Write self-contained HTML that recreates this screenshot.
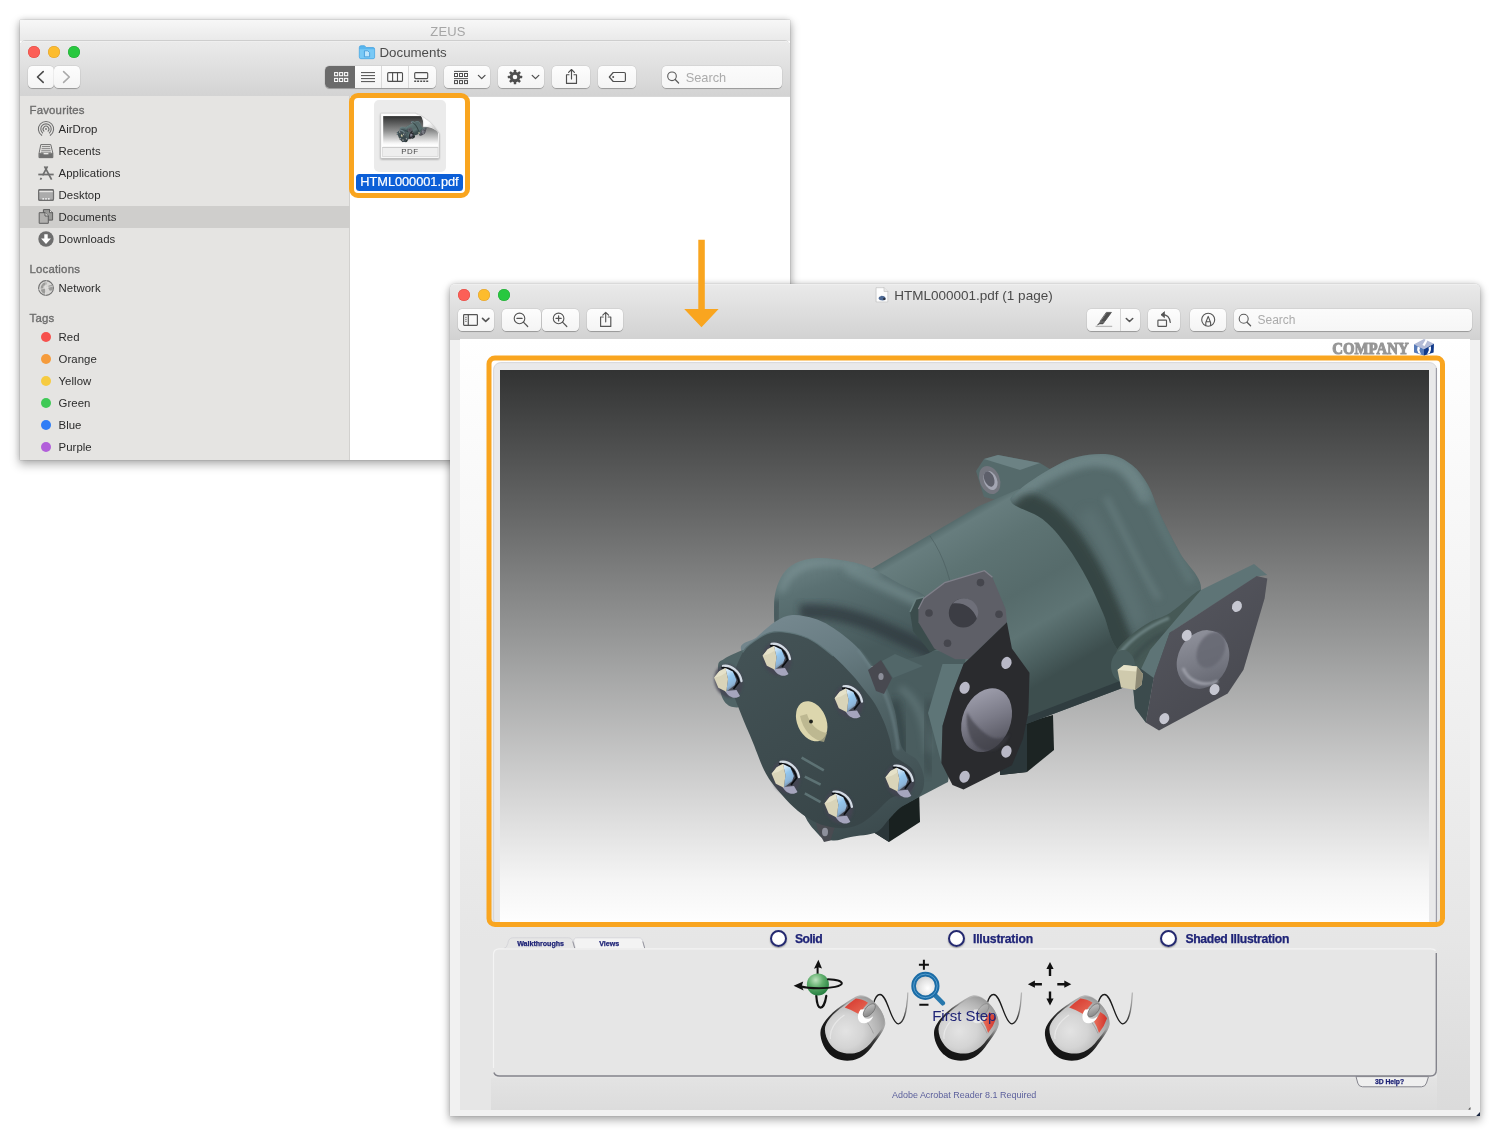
<!DOCTYPE html>
<html lang="en">
<head>
<meta charset="utf-8">
<title>Open PDF</title>
<style>
*{box-sizing:border-box;margin:0;padding:0}
html,body{width:1500px;height:1136px;overflow:hidden;background:#fff}
body{position:relative;font-family:"Liberation Sans",sans-serif;color:#333}
.abs{position:absolute}
.win{position:absolute;will-change:transform;box-shadow:0 0 1px rgba(0,0,0,.35),0 4px 9px 1px rgba(0,0,0,.27),0 0 7px rgba(0,0,0,.15)}
.tl{position:absolute;width:12px;height:12px;border-radius:50%}
.tl.r{background:#fc5f57;box-shadow:inset 0 0 0 .5px #df4941}
.tl.y{background:#fdbc2e;box-shadow:inset 0 0 0 .5px #dea032}
.tl.g{background:#28c83f;box-shadow:inset 0 0 0 .5px #24a637}
.btn{position:absolute;height:22.5px;border-radius:4.5px;background:linear-gradient(#fdfdfd,#f4f4f4);box-shadow:0 .5px .8px rgba(0,0,0,.26),0 0 0 .5px rgba(0,0,0,.07)}
.btn svg{position:absolute;left:0;top:0;width:100%;height:100%;overflow:visible}
.sb-h{position:absolute;left:9.5px;font-size:11.4px;line-height:14px;color:#6c6c6c;-webkit-text-stroke:.35px #6c6c6c;letter-spacing:.2px;white-space:nowrap}
.sb-i{position:absolute;left:38.5px;font-size:11.4px;color:#2b2b2b;white-space:nowrap;line-height:14px;letter-spacing:.05px}
.dot{position:absolute;left:21px;width:10px;height:10px;border-radius:50%}
.ico{position:absolute;left:17px;width:18px;height:18px;overflow:visible}
.nav{color:#1f2477;font-weight:bold;white-space:nowrap;position:absolute;-webkit-text-stroke:.25px #1f2477}
.radio{position:absolute;width:17px;height:17px;border-radius:50%;border:2px solid #23286f;background:radial-gradient(circle at 50% 45%,#fff 55%,#d9d9e4 100%);box-shadow:0 1px 1.5px rgba(0,0,0,.35)}
</style>
</head>
<body>

<!-- ================= FINDER WINDOW ================= -->
<div class="win" id="finder" style="left:20px;top:20px;width:770px;height:440px;background:#fff">
  <div class="abs" id="zeus" style="left:0;top:0;width:770px;height:21px;background:linear-gradient(#f7f7f7,#e9e9e9);text-align:center;font-size:13px;line-height:24px;color:#a6a6a6;letter-spacing:.2px"><span style="position:relative;left:43px">ZEUS</span></div>
  <div class="abs" id="ftool" style="left:0;top:20.5px;width:770px;height:55px;border-radius:5px 5px 0 0;background:linear-gradient(#ebebeb,#d3d3d3);box-shadow:inset 0 .5px 0 #f4f4f4,0 -.5px 0 #b4b4b4,0 .5px 0 #b1b1b1"></div>

  <!-- toolbar buttons -->
  <div class="tl r" style="left:8px;top:26px"></div>
  <div class="tl y" style="left:28px;top:26px"></div>
  <div class="tl g" style="left:48px;top:26px"></div>
  <div class="btn" style="left:8px;top:45.7px;width:25.5px"></div>
  <div class="btn" style="left:34px;top:45.7px;width:25.5px"></div>
  <div class="btn" style="left:305px;top:45.7px;width:111px;overflow:hidden"><div class="abs" style="left:0;top:0;width:30px;height:23px;background:#6b6b6b"></div><div class="abs" style="left:56.2px;top:0;width:.6px;height:23px;background:#d9d9d9"></div><div class="abs" style="left:83.2px;top:0;width:.6px;height:23px;background:#d9d9d9"></div></div>
  <div class="btn" style="left:423.8px;top:45.7px;width:46.2px"></div>
  <div class="btn" style="left:477.8px;top:45.7px;width:46.2px"></div>
  <div class="btn" style="left:531.8px;top:45.7px;width:38px"></div>
  <div class="btn" style="left:577.8px;top:45.7px;width:38.2px"></div>
  <div class="btn" style="left:641.7px;top:45.7px;width:120.3px;background:linear-gradient(#fbfbfb,#f6f6f6)"><span class="abs" style="left:24px;top:4.2px;font-size:12.8px;line-height:15px;color:#ababab">Search</span></div>
  <!-- window title -->
  <div class="abs" style="left:359.5px;top:25px;font-size:13.3px;line-height:16px;color:#4b4b4b;white-space:nowrap">Documents</div>
  <svg class="abs" style="left:0;top:0" width="770" height="440" viewBox="20 20 770 440" fill="none" stroke="#4e4e4e" stroke-width="1.25" stroke-linecap="round" stroke-linejoin="round">
    <!-- nav chevrons -->
    <path d="M43.2 71.6 37.5 77l5.700 5.400" stroke="#4a4a4a" stroke-width="1.6"/>
    <path d="M63.6 71.600 69.300 77l-5.700 5.400" stroke="#a9a9a9" stroke-width="1.600"/>
    <!-- folder title icon -->
    <path d="M359.300 47.300q0-1.600 1.600-1.600h3.600l1.700 1.800h6.900q1.500 0 1.500 1.500v8.300q0 1.400-1.500 1.400h-12.300q-1.500 0-1.500-1.400z" fill="#58b6ee" stroke="#3f9fe0" stroke-width=".7"/>
    <path d="M359.700 49.300h14.500v8q0 1-1 1h-12.500q-1 0-1-1z" fill="#79c9f6" stroke="none"/>
    <path d="M364.800 50.800h3l1.800 1.800v4.200h-4.800z" fill="#bfe5fb" stroke="#3f97d8" stroke-width=".8"/>
    <!-- view: icons (selected) -->
    <g stroke="#fff" stroke-width="1.050" stroke-linejoin="miter">
      <rect x="334.600" y="72.600" width="3.100" height="3.100"/><rect x="339.600" y="72.600" width="3.100" height="3.100"/><rect x="344.600" y="72.600" width="3.100" height="3.100"/>
      <rect x="334.600" y="78.400" width="3.100" height="3.100"/><rect x="339.600" y="78.400" width="3.100" height="3.100"/><rect x="344.600" y="78.400" width="3.100" height="3.100"/>
    </g>
    <!-- view: list -->
    <path d="M361 72.600h14M361 75.600h14M361 78.600h14M361 81.600h14" stroke-width="1" stroke-linecap="butt"/>
    <!-- view: columns -->
    <rect x="387.700" y="72.600" width="14.800" height="8.800" rx="1" stroke-width="1.100"/><path d="M392.600 72.600v8.800M397.500 72.600v8.800" stroke-width="1.100"/>
    <!-- view: gallery -->
    <rect x="414.700" y="72.600" width="13" height="6" rx="1" stroke-width="1.100"/>
    <path d="M414.200 81.300h2M417.100 81.300h2M420.200 81.300h2M423.200 81.300h2M426.200 81.300h2" stroke-width="1.600" stroke-linecap="butt"/>
    <!-- arrange -->
    <path d="M454 71.400h14M454 78.600h14" stroke-width="1" stroke-linecap="butt"/>
    <g stroke-width="1" stroke-linejoin="miter">
      <rect x="454.500" y="73.500" width="3" height="3"/><rect x="459.500" y="73.500" width="3" height="3"/><rect x="464.500" y="73.500" width="3" height="3"/>
      <rect x="454.500" y="80.600" width="3" height="3"/><rect x="459.500" y="80.600" width="3" height="3"/><rect x="464.500" y="80.600" width="3" height="3"/>
    </g>
    <path d="M478.400 75.400 481.700 78.600 485 75.400" stroke-width="1.300"/>
    <!-- gear -->
    <g transform="translate(515 77)" stroke="none" fill="#4e4e4e">
      <path fill-rule="evenodd" d="M0-5.200A5.200 5.200 0 1 0 0 5.200 5.200 5.200 0 1 0 0-5.200ZM0-2.300A2.300 2.300 0 1 1 0 2.300 2.300 2.300 0 1 1 0-2.300Z"/>
      <g id="gt"><rect x="-1.250" y="-7.200" width="2.500" height="3" rx=".5"/><rect x="-1.250" y="4.200" width="2.500" height="3" rx=".5"/></g>
      <use href="#gt" transform="rotate(45)"/><use href="#gt" transform="rotate(90)"/><use href="#gt" transform="rotate(135)"/>
    </g>
    <path d="M532.200 75.400 535.500 78.600 538.800 75.400" stroke-width="1.300"/>
    <!-- share -->
    <path d="M569 74.700h-2.500v8.700h10v-8.700H574" stroke-width="1.150"/>
    <path d="M571.500 79V69.700M568.600 72.400 571.500 69.500 574.400 72.400" stroke-width="1.150"/>
    <!-- tag -->
    <path d="M613.200 72.500h11q1.200 0 1.200 1.200v6.600q0 1.200-1.200 1.200h-11L609.300 77z" stroke-width="1.150"/>
    <circle cx="613.200" cy="77" r="1" fill="#4e4e4e" stroke="none"/>
    <!-- search glass -->
    <circle cx="672" cy="76.300" r="4.300" stroke="#5a5a5a" stroke-width="1.100"/><path d="M675.200 79.500 678.600 83" stroke="#5a5a5a" stroke-width="1.200"/>
  </svg>
  <div class="abs" id="fside" style="left:0;top:76px;width:330px;height:364px;background:#e5e4e2;border-right:1px solid #d2d1cf"></div>
  <!-- file item -->
  <div class="abs" style="left:354.3px;top:79.800px;width:71.700px;height:72px;border-radius:5px;background:#ebebeb"></div>
  <svg class="abs" style="left:352px;top:86px" width="76" height="60" viewBox="372 106 76 60">
    <defs>
      <linearGradient id="fi1" x1="0" y1="0" x2="0" y2="1"><stop offset="0" stop-color="#2e2f2f"/><stop offset=".08" stop-color="#3e3f3f"/><stop offset=".5" stop-color="#8d8e8e"/><stop offset=".92" stop-color="#f6f6f6"/><stop offset="1" stop-color="#fff"/></linearGradient>
      <linearGradient id="fi2" x1=".1" y1="0" x2=".8" y2="1"><stop offset="0" stop-color="#fff"/><stop offset=".55" stop-color="#fbfbfb"/><stop offset="1" stop-color="#b4b4b4"/></linearGradient>
      <filter id="fis" x="-10%" y="-10%" width="120%" height="130%"><feGaussianBlur stdDeviation=".8"/></filter>
      <clipPath id="ficl"><path d="M383.100 116.100H421q2.600 4 2.300 10.600 7-.6 12.700 3.600 1.400 1.200 2.100 2.600V145.500H383.100z"/></clipPath>
    </defs>
    <path d="M380.700 113.200h34.700q14 5 23.700 20.400v24.700h-58.400z" fill="#000" opacity=".38" filter="url(#fis)" transform="translate(0 1)"/>
    <path d="M380.700 113.200h34.700q14 5 23.700 20.400v24.700h-58.400z" fill="#fdfdfd" stroke="#c2c2c2" stroke-width=".5"/>
    <g clip-path="url(#ficl)">
      <rect x="383.100" y="116.100" width="55" height="29.400" fill="url(#fi1)"/>
      <use href="#pump" transform="translate(357.500 96.300) scale(.0545)"/>
    </g>
    <path d="M415.400 113.200q6 1.300 7.400 3.800 1.600 4 .5 9.700 7-.7 11.900 3 2.800 1.800 3.900 3.900-8-14-23.700-20.400z" fill="url(#fi2)" stroke="#cfcfcf" stroke-width=".3"/>
    <rect x="382.600" y="147.400" width="55.400" height="9.300" fill="#eeeeee" stroke="#c6c6c6" stroke-width=".5"/>
    <path d="M383 147.300h54.600" stroke="#b5b5b5" stroke-width=".5"/>
    <text x="410" y="154.400" text-anchor="middle" font-family="Liberation Sans, sans-serif" font-size="7.900" fill="#4a4a4a" stroke="none" letter-spacing=".6">PDF</text>
  </svg>
  <div class="abs" style="left:335.800px;top:154.200px;width:107.300px;height:16.600px;border-radius:3.500px;background:#0c5fd7;color:#fff;font-size:12.800px;line-height:16.600px;text-align:center;letter-spacing:-.05px;white-space:nowrap;-webkit-text-stroke:.2px #fff">HTML000001.pdf</div>
  <div class="abs" style="left:329.300px;top:72.600px;width:121px;height:105.700px;border:5px solid #f9a51f;border-radius:9px"></div>

  <!-- sidebar -->
  <div class="abs" style="left:0;top:186.200px;width:330px;height:21.600px;background:#cfcecc"></div>
  <div class="sb-h" style="top:82.6px">Favourites</div>
  <div class="sb-h" style="top:241.9px">Locations</div>
  <div class="sb-h" style="top:290.9px">Tags</div>
  <div class="sb-i" style="top:102.0px">AirDrop</div>
  <div class="sb-i" style="top:124.1px">Recents</div>
  <div class="sb-i" style="top:146.1px">Applications</div>
  <div class="sb-i" style="top:168.1px">Desktop</div>
  <div class="sb-i" style="top:190.1px">Documents</div>
  <div class="sb-i" style="top:212.1px">Downloads</div>
  <div class="sb-i" style="top:261.1px">Network</div>
  <div class="sb-i" style="top:310.1px">Red</div>
  <div class="dot" style="top:311.8px;background:#f6514d"></div>
  <div class="sb-i" style="top:332.1px">Orange</div>
  <div class="dot" style="top:333.8px;background:#f59b3b"></div>
  <div class="sb-i" style="top:354.1px">Yellow</div>
  <div class="dot" style="top:355.8px;background:#f6cb40"></div>
  <div class="sb-i" style="top:376.1px">Green</div>
  <div class="dot" style="top:377.8px;background:#3fc956"></div>
  <div class="sb-i" style="top:398.1px">Blue</div>
  <div class="dot" style="top:399.8px;background:#2f7df6"></div>
  <div class="sb-i" style="top:420.1px">Purple</div>
  <div class="dot" style="top:421.8px;background:#b25fda"></div>
  <svg class="abs" style="left:0;top:0" width="340" height="440" viewBox="20 20 340 440" fill="none" stroke="#6f6f6f" stroke-width="1.100" stroke-linecap="round" stroke-linejoin="round">
    <!-- airdrop -->
    <g transform="translate(46 129)">
      <path d="M-4.300 6.300A7.600 7.600 0 1 1 4.300 6.300"/>
      <path d="M-3.400 4A5.200 5.200 0 1 1 3.400 4"/>
      <path d="M-2.100 2.100A2.900 2.900 0 1 1 2.100 2.100"/>
      <circle cx="0" cy="0" r=".9" fill="#6f6f6f" stroke="none"/>
    </g>
    <!-- recents -->
    <g>
      <path d="M41.200 144.600h9.600l2 8.400v4.600h-13.600V153z" fill="#e9e8e6" stroke-width="1"/>
      <path d="M42.300 146.500h7.400M42 148.400h8M41.700 150.300h8.600M41.400 152.200h9.200" stroke-width=".8"/>
      <path d="M39.400 153.200h3.700l.8 1.500h4.200l.8-1.500h3.700v4.400H39.400z" fill="#6f6f6f" stroke-width=".6"/>
    </g>
    <!-- applications -->
    <g stroke-width="1.750" stroke-linecap="butt">
      <path d="M38.300 174.500h15.400"/>
      <path d="M47.500 166.300 42.700 175.300M41.400 177.800 40.400 179.700"/>
      <path d="M44.500 166.300 51.600 179.700"/>
    </g>
    <!-- desktop -->
    <g>
      <rect x="38.600" y="189.600" width="14.900" height="10.800" rx="1.400" fill="#ababab"/>
      <path d="M39.200 191.600h13.700" stroke="#e6e5e3" stroke-width="1.200" stroke-linecap="butt"/>
      <path d="M42.400 199h1.600M45.200 199h1.600M48 199h1.600" stroke="#fff" stroke-width="1.300" stroke-linecap="butt"/>
      <rect x="38.600" y="189.600" width="14.900" height="10.800" rx="1.400"/>
    </g>
    <!-- documents -->
    <g stroke-width="1" stroke="#5d5d5d">
      <path d="M43.800 209.600h5.700l3.100 3.100v7.400h-8.800z" fill="#9a9a98"/>
      <path d="M49.500 209.600v3.100h3.100" fill="#e0dfdd"/>
      <path d="M39.600 212.700h5.400l3.300 3.300v7.300h-8.700z" fill="#b1b0ae"/>
      <path d="M45 212.700v3.300h3.300" fill="#e6e5e3"/>
    </g>
    <!-- downloads -->
    <circle cx="46" cy="239" r="7.700" fill="#6e6e6e" stroke="none"/>
    <path d="M44.300 234.300h3.400v4.200h3.300L46 244l-5-5.500h3.300z" fill="#fff" stroke="none"/>
    <!-- network -->
    <g>
      <circle cx="46" cy="288" r="7.400" fill="#d9d8d6" stroke-width="1.100"/>
      <path d="M43 283.300q2.600-1.700 4.200-.8l-1 2.600-2.600.6-.3 2.400 2 .5.500 2.800-1.500 2.600q-3.400-1.800-3.700-5.500.4-3.300 2.400-5.200zM48.600 285.500l3.400-.6q1.400 2.600.6 5.400l-2.800.4-1.600-2.600z" fill="#9b9b99" stroke="none"/>
      <path d="M46.300 280.800q-1.600 7 -.6 14.400M39 289.500q7-1.200 14-3.500" stroke="#e4e3e1" stroke-width=".7"/>
    </g>
  </svg>
</div>

<!-- ================= PREVIEW WINDOW ================= -->
<div class="win" id="preview" style="left:450px;top:284px;width:1030px;height:832px;background:#f1f1f1;border-radius:5px 5px 0 0">
  <div class="abs" id="ptool" style="left:0;top:0;width:1030px;height:54.5px;border-radius:5px 5px 0 0;background:linear-gradient(#eaeaea,#d2d2d2);box-shadow:inset 0 .5px 0 #f4f4f4,0 .5px 0 #b1b1b1"></div>

  <div class="tl r" style="left:8px;top:5px"></div>
  <div class="tl y" style="left:28px;top:5px"></div>
  <div class="tl g" style="left:48px;top:5px"></div>
  <div class="btn" style="left:7.800px;top:24.800px;width:36.200px;height:22px"></div>
  <div class="btn" style="left:51.800px;top:24.800px;width:39.400px;height:22px"></div>
  <div class="btn" style="left:92px;top:24.800px;width:37.200px;height:22px"></div>
  <div class="btn" style="left:137px;top:24.800px;width:36px;height:22px"></div>
  <div class="btn" style="left:637px;top:24.800px;width:53px;height:22px"><div class="abs" style="left:33px;top:0;width:.6px;height:22px;background:#d6d6d6"></div></div>
  <div class="btn" style="left:698.200px;top:24.800px;width:31.800px;height:22px"></div>
  <div class="btn" style="left:740.200px;top:24.800px;width:36px;height:22px"></div>
  <div class="btn" style="left:784px;top:24.800px;width:238px;height:22px;background:linear-gradient(#fbfbfb,#f6f6f6)"><span class="abs" style="left:23.500px;top:4px;font-size:12px;line-height:15px;color:#ababab">Search</span></div>
  <div class="abs" style="left:444.300px;top:3.600px;font-size:13.500px;line-height:16px;color:#4a4a4a;white-space:nowrap">HTML000001.pdf (1 page)</div>
  <svg class="abs" style="left:0;top:0" width="1030" height="56" viewBox="450 284 1030 56" fill="none" stroke="#555" stroke-width="1.150" stroke-linecap="round" stroke-linejoin="round">
    <!-- title doc icon -->
    <path d="M876.400 287.700h7.600l3.800 3.800v10.400h-11.400z" fill="#fdfdfd" stroke="#bcbcbc" stroke-width=".6"/>
    <path d="M884 287.700v3.800h3.800" fill="#e9e9e9" stroke="#bcbcbc" stroke-width=".6"/>
    <path d="M879 297l2.600-1.300 2.600.5 1.500 1.800-.6 1.900-2.400.5-3-.5-1.200-1.500z" fill="#4c6893" stroke="none"/>
    <circle cx="884.300" cy="298.900" r="1.200" fill="#2d3340" stroke="none"/>
    <!-- sidebar toggle -->
    <rect x="463.600" y="314.700" width="13.800" height="10.600" rx=".8" stroke-width="1.200"/>
    <path d="M468.300 314.700v10.600" stroke-width="1.200"/>
    <path d="M465.100 317.300h1.700M465.100 319.300h1.700M465.100 321.300h1.700" stroke-width=".8" stroke-linecap="butt"/>
    <path d="M482.500 318.400 485.700 321.400 488.900 318.400" stroke-width="1.600"/>
    <!-- zoom out -->
    <circle cx="519.500" cy="318.400" r="5.300" stroke-width="1.100"/><path d="M523.400 322.200 527.700 326.500M516.900 318.400h5.200" stroke-width="1.200"/>
    <!-- zoom in -->
    <circle cx="558.600" cy="318.400" r="5.300" stroke-width="1.100"/><path d="M562.500 322.200 566.800 326.500M556 318.400h5.200M558.600 315.800v5.200" stroke-width="1.200"/>
    <!-- share -->
    <path d="M603.200 317h-2.600v9.400h10.200V317h-2.600" stroke-width="1.150"/>
    <path d="M605.700 321.800v-9.300M602.800 315.200 605.700 312.300 608.600 315.200" stroke-width="1.150"/>
    <!-- highlighter -->
    <path d="M1106.700 312.400h4.700l-6.600 9h-4.400z" fill="#4f4f4f" stroke="#4f4f4f" stroke-width=".8"/>
    <path d="M1100.100 322.200h4.200l-1.400 1.700h-3.200l-2 1.100z" fill="#4f4f4f" stroke="#4f4f4f" stroke-width=".6"/>
    <path d="M1095.600 326.400h16.600" stroke="#b9b9b9" stroke-width="1.300" stroke-linecap="butt"/>
    <path d="M1126.300 318.500 1129.500 321.500 1132.700 318.500" stroke-width="1.600"/>
    <!-- rotate -->
    <rect x="1157.900" y="320.100" width="8.600" height="6.200" rx=".6" stroke-width="1.150"/>
    <path d="M1161.600 314.700q7.800-.4 8.700 7.800" stroke-width="1.150"/>
    <path d="M1164.200 311.900 1161 314.700 1164.200 317.400z" fill="#555" stroke-width=".8"/>
    <!-- markup -->
    <circle cx="1208.200" cy="319.800" r="6.500" stroke-width="1.100"/>
    <path d="M1205.800 325.400v-2.900l2.400-6.100 2.400 6.100v2.900M1206.400 321.800h3.600" stroke-width="1.100"/>
    <!-- search glass -->
    <circle cx="1243.700" cy="318.800" r="4.500" stroke="#5a5a5a" stroke-width="1.100"/><path d="M1247 322.200 1250.600 325.800" stroke="#5a5a5a" stroke-width="1.250"/>
  </svg>
  <div class="abs" id="page" style="left:10px;top:55px;width:1010px;height:771px;background:linear-gradient(#fff 0,#fdfdfd 6%,#e6e6e6 78%,#e6e6e6 100%);overflow:hidden">
    <div class="abs" style="left:31px;top:739px;width:946px;height:32px;background:linear-gradient(#e3e3e3,#dcdcdc)"></div><div class="abs" style="left:977px;top:600px;width:33px;height:171px;background:linear-gradient(#e6e6e6,#dbdbdb)"></div>
    <svg class="abs" id="pagesvg" style="left:0;top:0" width="1010" height="771" viewBox="460 339 1010 771">
      <defs>
        <linearGradient id="vpg" x1="0" y1="0" x2="0" y2="1"><stop offset="0" stop-color="#323333"/><stop offset=".25" stop-color="#646565"/><stop offset=".5" stop-color="#9a9b9b"/><stop offset=".77" stop-color="#d5d5d5"/><stop offset=".92" stop-color="#f4f4f4"/><stop offset="1" stop-color="#fefefe"/></linearGradient>
      </defs>
      <!-- viewer frame -->
      <rect x="493.600" y="362.600" width="943" height="563" rx="7" fill="#e9e9ea" stroke="#cfcfd3" stroke-width=".8"/>
      <path d="M1436.400 368v556" stroke="#9c9ca6" stroke-width="1.200"/>
      <rect x="500" y="370" width="929" height="553" fill="url(#vpg)"/>
      <!--PUMP-START-->
      <defs>
        <filter id="b1" x="-20%" y="-20%" width="140%" height="140%"><feGaussianBlur stdDeviation="1.2"/></filter>
        <filter id="b2" x="-30%" y="-30%" width="160%" height="160%"><feGaussianBlur stdDeviation="2.2"/></filter>
        <filter id="b3" x="-30%" y="-30%" width="160%" height="160%"><feGaussianBlur stdDeviation="3.5"/></filter>
        <filter id="b6" x="-40%" y="-40%" width="180%" height="180%"><feGaussianBlur stdDeviation="6"/></filter>
        <linearGradient id="pCyl" gradientUnits="userSpaceOnUse" x1="925" y1="534" x2="1019" y2="696"><stop offset="0" stop-color="#4f6465"/><stop offset=".06" stop-color="#677d7e"/><stop offset=".25" stop-color="#5d7373"/><stop offset=".52" stop-color="#566b6b"/><stop offset=".72" stop-color="#5e7474"/><stop offset=".88" stop-color="#4b5f5f"/><stop offset="1" stop-color="#3d4e4e"/></linearGradient>
        <linearGradient id="pHump" gradientUnits="userSpaceOnUse" x1="805" y1="556" x2="840" y2="660"><stop offset="0" stop-color="#6d8385"/><stop offset=".3" stop-color="#5b7173"/><stop offset="1" stop-color="#475a5c"/></linearGradient>
        <linearGradient id="pFace" gradientUnits="userSpaceOnUse" x1="760" y1="640" x2="880" y2="830"><stop offset="0" stop-color="#435255"/><stop offset=".5" stop-color="#3d4b4e"/><stop offset="1" stop-color="#374447"/></linearGradient>
        <linearGradient id="pRim" gradientUnits="userSpaceOnUse" x1="795" y1="615" x2="880" y2="830"><stop offset="0" stop-color="#74878e"/><stop offset=".22" stop-color="#687c82"/><stop offset=".5" stop-color="#506366"/><stop offset="1" stop-color="#3c4b4e"/></linearGradient>
        <linearGradient id="pHoleB" gradientUnits="userSpaceOnUse" x1="968" y1="700" x2="1008" y2="742"><stop offset="0" stop-color="#9a9aa8"/><stop offset=".45" stop-color="#7b7b88"/><stop offset="1" stop-color="#51515b"/></linearGradient>
        <linearGradient id="pHoleR" gradientUnits="userSpaceOnUse" x1="1182" y1="640" x2="1226" y2="682"><stop offset="0" stop-color="#8e909a"/><stop offset=".5" stop-color="#7a7c86"/><stop offset="1" stop-color="#62646e"/></linearGradient>
        <linearGradient id="pFlR" gradientUnits="userSpaceOnUse" x1="1170" y1="600" x2="1250" y2="700"><stop offset="0" stop-color="#54555d"/><stop offset="1" stop-color="#484950"/></linearGradient>
        <linearGradient id="bSky" x1="0" y1="0" x2=".3" y2="1"><stop offset="0" stop-color="#f2f7fc"/><stop offset=".45" stop-color="#93c6ee"/><stop offset=".8" stop-color="#8db4d8"/><stop offset="1" stop-color="#6f7f90"/></linearGradient>
        <g id="bolt">
          <ellipse cx="1.500" cy="2.500" rx="14" ry="17" transform="rotate(-18 1.500 2.500)" fill="#444553" opacity=".8" filter="url(#b1)"/>
          <path d="M-2 12.500C2 19.500 9 21 13 17.500L9.500 11.500z" fill="#a5a5bd"/>
          <path d="M-4-12.500C4-14 13-7 14.500 2.500" stroke="#d3dbe4" stroke-width="2.300" fill="none" stroke-linecap="round"/>
          <path d="M-5.500-10.700C2-12.200 10.500-5.500 12 3.500L6.500 10.500" stroke="#0b0e11" stroke-width="1.700" fill="none"/>
          <path d="M-1.600-10.500 5.900-7 9.400 1.400 7.600 6.700-.7 13.300 1 .5z" fill="url(#bSky)"/>
          <path d="M-12.900-.8-7.800-7.200-1.600-10.500 1 .5-.7 13.300-8.700 9.300z" fill="#d9d4b9"/>
          <path d="M-12.900-.8-7.800-7.200-1.600-10.500-.6-6-6.500-2.500z" fill="#e7e3cc" opacity=".8"/>
        </g>
      </defs>
      <g id="pump">
        <path d="M976 471L984 459L998 455L1040 463L1053 471L1023 493L1001 501L984 497z" fill="#556a6b"/>
        <path d="M984 459L998 455L1040 463L1020 470z" fill="#6c8284"/>
        <ellipse cx="989.7" cy="480" rx="10" ry="14.500" transform="rotate(-22 989.700 480)" fill="#74767f"/>
        <ellipse cx="990.5" cy="480.500" rx="6.500" ry="10" transform="rotate(-22 990.500 480.500)" fill="#a3a5b2"/>
        <ellipse cx="989.2" cy="479" rx="4.800" ry="8" transform="rotate(-22 989.200 479)" fill="#5d5f6a"/>
        <path d="M1000 738L1027 722L1053 715L1054 750L1027 772L1000 775z" fill="#1c2423"/>
        <path d="M1000 738L1027 724L1027 772L1000 775z" fill="#2b373a"/>
        <path d="M862 800L890 790L919 788L920 822L889 842L862 825z" fill="#192120"/>
        <path d="M862 800L889 791L889 842L862 825z" fill="#2b3639"/>
        <path d="M866 572L979 506L1019 489L1080 500L1122 600L1130 650L1125 687L1029 723L959 747L893 703z" fill="url(#pCyl)"/>
        <path d="M959 742L1029 716L1125 679L1125 687L1029 723L959 747z" fill="#303d40"/>
        <path d="M930 536c14 20 22 46 24 70" fill="none" stroke="#495c5e" stroke-width="1" opacity=".6"/>
        <clipPath id="cElb"><path d="M1012 503C1008 498.1 1012.7 495.7 1019 490C1025.3 484.3 1040.3 474.5 1050 469C1059.7 463.5 1067.2 459.4 1077 457C1086.8 454.6 1099.8 453.2 1109 454.5C1118.2 455.8 1125.5 459.9 1132 465C1138.5 470.1 1143.2 476.5 1148 485C1152.8 493.5 1155.7 504.7 1161 516C1166.3 527.3 1173.3 540.7 1180 553C1186.7 565.3 1202.3 576.8 1201 590C1199.7 603.2 1180.2 617 1172 632C1163.8 647 1161.2 677.2 1152 680C1142.8 682.8 1125.1 660 1117 649C1108.9 638 1108.4 625.8 1103.5 614.3C1098.6 602.8 1093.9 591.5 1087.7 580C1081.5 568.5 1074.1 555.7 1066.6 545.6C1059.1 535.5 1051.9 526.3 1042.8 519.2C1033.7 512.1 1016 507.9 1012 503z"/></clipPath>
        <path d="M1012 503C1008 498.1 1012.7 495.7 1019 490C1025.3 484.3 1040.3 474.5 1050 469C1059.7 463.5 1067.2 459.4 1077 457C1086.8 454.6 1099.8 453.2 1109 454.5C1118.2 455.8 1125.5 459.9 1132 465C1138.5 470.1 1143.2 476.5 1148 485C1152.8 493.5 1155.7 504.7 1161 516C1166.3 527.3 1173.3 540.7 1180 553C1186.7 565.3 1202.3 576.8 1201 590C1199.7 603.2 1180.2 617 1172 632C1163.8 647 1161.2 677.2 1152 680C1142.8 682.8 1125.1 660 1117 649C1108.9 638 1108.4 625.8 1103.5 614.3C1098.6 602.8 1093.9 591.5 1087.7 580C1081.5 568.5 1074.1 555.7 1066.6 545.6C1059.1 535.5 1051.9 526.3 1042.8 519.2C1033.7 512.1 1016 507.9 1012 503z" fill="#556a6b"/>
        <g clip-path="url(#cElb)">
        <path d="M1017 497c12-14 34-26 60-35 14-4 32-4 46 4 10 7 16 18 22 30" fill="none" stroke="#72898b" stroke-width="15" opacity=".85" filter="url(#b3)" stroke-linecap="round"/>
        <path d="M1146 492c6 14 14 32 22 46l24 44" fill="none" stroke="#637a7c" stroke-width="9" opacity=".7" filter="url(#b3)"/>
        <path d="M1106 497c16 32 32 68 53 102" fill="none" stroke="#758c8e" stroke-width="5" opacity=".55" filter="url(#b3)"/>
        <path d="M1030 512C1032.7 513.7 1039.9 516.4 1046 522C1052.1 527.6 1059.6 535.9 1066.6 545.6C1073.5 555.3 1081.5 568.5 1087.7 580C1093.9 591.5 1098.6 602.8 1103.5 614.3C1108.4 625.8 1113.6 640 1117 649C1120.4 658 1122.8 664.8 1124 668" fill="none" stroke="#2b3736" stroke-width="36" opacity=".72" filter="url(#b3)" stroke-linecap="round"/>
        <path d="M1086 512c20 30 38 70 54 112" fill="none" stroke="#667d7f" stroke-width="12" opacity=".5" filter="url(#b6)"/>
        </g>
        <path d="M1116 653C1117.3 647 1124.3 641.2 1130 636C1135.7 630.8 1143.3 625.8 1150 622C1156.7 618.2 1161.5 618.3 1170 613C1178.5 607.7 1200.7 586.8 1201 590C1201.3 593.2 1180.2 617 1172 632C1163.8 647 1158.3 670.3 1152 680C1145.7 689.7 1139 691.3 1134 690C1129 688.7 1125 678.2 1122 672C1119 665.8 1114.7 659 1116 653z" fill="#465956"/>
        <path d="M1119 654c12-15 30-28 50-36" fill="none" stroke="#7e9597" stroke-width="3.500" opacity=".65" filter="url(#b1)"/>
        <path d="M1133 660c8-12 20-22 34-28" fill="none" stroke="#344244" stroke-width="4" opacity=".6" filter="url(#b2)"/>
        <path d="M1201 590L1254 564L1267.3 575L1256.7 576.5L1169.6 633L1153.7 678L1145.8 722.5L1135 708L1133 686L1150 650z" fill="#5e7476"/>
        <path d="M1133 686L1135 708L1145.8 722.5L1153.7 678L1140 668z" fill="#3c4b4d"/>
        <path d="M1169.6 632.8L1256.7 576L1267.3 578.6L1264.6 598.4L1243.5 669.7L1227.7 693.5L1159 730.5L1145.8 722.5L1153.7 677.7z" fill="url(#pFlR)"/>
        <ellipse cx="1203" cy="659.500" rx="25" ry="30.500" transform="rotate(28 1203 659.500)" fill="url(#pHoleR)"/>
        <ellipse cx="1211" cy="650" rx="13" ry="19" transform="rotate(28 1211 650)" fill="#666872" opacity=".85" filter="url(#b1)"/>
        <path d="M1183 668c5 13 20 20 35 13" fill="none" stroke="#aeb0ba" stroke-width="3" opacity=".7" filter="url(#b1)"/>
        <ellipse cx="1236.9" cy="606.4" rx="4.800" ry="5.700" transform="rotate(28 1236.9 606.4)" fill="#c6c7d1"/>
        <ellipse cx="1186.7" cy="635.4" rx="4.800" ry="5.700" transform="rotate(28 1186.7 635.4)" fill="#c6c7d1"/>
        <ellipse cx="1214.5" cy="689.5" rx="4.800" ry="5.700" transform="rotate(28 1214.5 689.5)" fill="#c6c7d1"/>
        <ellipse cx="1164.3" cy="718.6" rx="4.800" ry="5.700" transform="rotate(28 1164.3 718.6)" fill="#c6c7d1"/>
        <ellipse cx="1123" cy="666" rx="12" ry="16" fill="#4a5e5e"/>
        <path d="M1117.5 670L1124 665L1137 666.5L1143 674L1141.5 685L1135 690L1121 687.5z" fill="#cfcaad"/>
        <path d="M1137 666.5L1143 674L1141.5 685L1135 690z" fill="#8e8a75"/>
        <path d="M1117.5 670L1124 665L1137 666.5L1136 671.5z" fill="#e6e2c8"/>
        <path d="M878 640L966 656L948 782L902 806L886 764z" fill="#4a5d5f"/>
        <path d="M900 688c16 10 26 32 28 64" fill="none" stroke="#6e8587" stroke-width="6" opacity=".6" filter="url(#b3)"/>
        <path d="M894 700c10 30 12 62 4 94" fill="none" stroke="#2b373a" stroke-width="8" opacity=".65" filter="url(#b3)"/>
        <path d="M930 700c-6 26-6 52 0 74" fill="none" stroke="#344244" stroke-width="8" opacity=".5" filter="url(#b3)"/>
        <clipPath id="cHump"><path d="M774 607C774 600.7 774.5 595.5 776 590C777.5 584.5 779.7 578.5 783 574C786.3 569.5 790.2 565.7 796 563C801.8 560.3 809.5 558.3 818 558C826.5 557.7 838.2 559.3 847 561C855.8 562.7 862.2 564.2 871 568C879.8 571.8 890.8 579 900 584C909.2 589 922.7 591.7 926 598C929.3 604.3 918.7 613.5 920 622C921.3 630.5 937.3 642.5 934 649C930.7 655.5 909 658.2 900 661C891 663.8 887 665.5 880 666C873 666.5 863.7 666.3 858 664C852.3 661.7 851.7 657 846 652C840.3 647 831.5 638.3 824 634C816.5 629.7 807.2 627.4 801 626C794.8 624.6 791.2 625.2 787 625.5C782.8 625.8 778.2 631.1 776 628C773.8 624.9 774 613.3 774 607z"/></clipPath>
        <path d="M774 607C774 600.7 774.5 595.5 776 590C777.5 584.5 779.7 578.5 783 574C786.3 569.5 790.2 565.7 796 563C801.8 560.3 809.5 558.3 818 558C826.5 557.7 838.2 559.3 847 561C855.8 562.7 862.2 564.2 871 568C879.8 571.8 890.8 579 900 584C909.2 589 922.7 591.7 926 598C929.3 604.3 918.7 613.5 920 622C921.3 630.5 937.3 642.5 934 649C930.7 655.5 909 658.2 900 661C891 663.8 887 665.5 880 666C873 666.5 863.7 666.3 858 664C852.3 661.7 851.7 657 846 652C840.3 647 831.5 638.3 824 634C816.5 629.7 807.2 627.4 801 626C794.8 624.6 791.2 625.2 787 625.5C782.8 625.8 778.2 631.1 776 628C773.8 624.9 774 613.3 774 607z" fill="url(#pHump)"/>
        <g clip-path="url(#cHump)">
        <path d="M781 592c6-19 19-28 39-29 20-1 42 4 60 10" fill="none" stroke="#8ba3a5" stroke-width="6" opacity=".5" filter="url(#b3)"/>
        <path d="M846 568l78 36" fill="none" stroke="#758c8e" stroke-width="11" opacity=".7" filter="url(#b3)"/>
        <path d="M800 612c20-2 44 2 66 10 24 9 46 20 70 32" fill="none" stroke="#2d393c" stroke-width="15" opacity=".75" filter="url(#b3)"/>
        <path d="M778 600c-2 8-3 18-2 28" fill="none" stroke="#3b4a4d" stroke-width="8" opacity=".5" filter="url(#b2)"/>
        </g>
        <path d="M742 652C736.5 641.5 751.4 642.1 757 637C762.6 631.9 769.6 625.2 775.5 621.5C781.4 617.8 785.8 615.5 792.3 615C798.8 614.5 807.9 616.5 814.7 618.7C821.6 620.9 826.4 623.3 833.4 628C840.4 632.7 850.5 640.5 856.7 646.7C862.9 652.9 866.3 659.9 870.7 665.4C875.1 670.9 879 672.6 883 680C887 687.4 891.5 698.8 894.6 709.9C897.7 721 897.8 738.1 901.5 746.5C905.2 754.9 913.2 754.8 917 760C920.8 765.2 923.5 772.2 924 778C924.5 783.8 924 790 920 795C916 800 905.2 803.9 900 808C894.8 812.1 892.8 815.5 888.8 819.5C884.8 823.5 882.5 829.3 876.1 832.2C869.8 835.1 857.9 835.5 850.7 836.9C843.5 838.3 838.2 840.9 832.8 840.4C827.3 839.9 823.5 840.7 818 834C812.5 827.3 804.7 822.3 800 800C795.3 777.7 799.7 724.7 790 700C780.3 675.3 747.5 662.5 742 652z" fill="url(#pRim)"/>
        <path d="M858 650c14 16 26 38 33 62 4 14 6 26 7 38" fill="none" stroke="#70868b" stroke-width="3" opacity=".55" filter="url(#b1)"/>
        <path d="M718 667C718.3 660.7 719.7 661.8 724 659C728.3 656.2 738.3 651.2 744 650C749.7 648.8 758 643.7 758 652C758 660.3 748.2 690.8 744 700C739.8 709.2 736.7 707.5 733 707C729.3 706.5 724.5 703.7 722 697C719.5 690.3 717.7 673.3 718 667z" fill="#506466"/>
        <path d="M815.5 820L835 826.5L830.5 840.5L824 842L818 831z" fill="#494b51"/>
        <ellipse cx="825" cy="832" rx="3" ry="4.200" fill="#8e909b"/>
        <path d="M734.8 672C733.2 678.5 732.1 684.5 733.2 691.6C734.3 698.7 738 706.1 741.2 714.5C744.5 722.9 748.6 732 752.7 741.9C756.8 751.8 761.1 764.9 766 773.7C770.9 782.6 776.7 788.8 782 795C787.3 801.2 792.8 806.6 798 811C803.2 815.4 808.5 818.6 813.5 821.2C818.5 823.8 822.7 825.4 828.2 826.5C833.7 827.6 840.9 828.6 846.5 828C852.1 827.4 857.1 825.7 862 823C866.9 820.3 872.2 815.3 876 812C879.8 808.7 882.2 805.5 885 803C887.8 800.5 889.2 798.8 893 797C896.8 795.2 904.3 794.8 908 792.5C911.7 790.2 914.2 786.8 915 783C915.8 779.2 915 773.5 913 770C911 766.5 906.2 764.5 903 762C899.8 759.5 895.7 758.7 893.5 755C891.3 751.3 891.6 745.5 890 740C888.4 734.5 886.5 728 884 722C881.5 716 878.2 709.3 875 704C871.8 698.7 868.3 694.9 864.5 690C860.7 685.1 857.2 680.4 852 674.7C846.8 669 839.6 661.5 833.4 656C827.2 650.5 820.2 645.4 814.7 642C809.2 638.6 806.3 637.2 800.7 635.5C795.1 633.8 786.6 632 781 631.7C775.4 631.4 772.3 631.4 767 633.6C761.7 635.8 753.3 641.7 749.3 644.8C745.3 647.9 745.2 647.8 742.8 652.3C740.4 656.8 736.4 665.5 734.8 672z" fill="url(#pFace)"/>
        <path d="M833.4 656C830.3 653.7 820.2 645.4 814.7 642C809.2 638.6 806.3 637.2 800.7 635.5C795.1 633.8 786.6 632 781 631.7C775.4 631.4 772.3 631.4 767 633.6C761.7 635.8 753.3 641.7 749.3 644.8C745.3 647.9 743.9 651 742.8 652.3" fill="none" stroke="#60777a" stroke-width="1.300" opacity=".8"/>
        <path d="M801.600 757.700l22.200 12.700M804.800 776.700l15.800 7.900M804.800 793.300l15.800 8.800" stroke="#5d7274" stroke-width="2.600" fill="none"/>
        <ellipse cx="811.700" cy="721.300" rx="14.500" ry="21" transform="rotate(-24 811.700 721.300)" fill="#dcd6ad"/>
        <path d="M800 716c3 14 12 24 24 26l3-9c-9-1-17-9-20-19z" fill="#b3ad88" opacity=".75"/>
        <circle cx="811" cy="721.500" r="1.900" fill="#1f211c"/>
        <use href="#bolt" transform="translate(727 678.5)"/>
        <use href="#bolt" transform="translate(775.5 656.5)"/>
        <use href="#bolt" transform="translate(847.5 699)"/>
        <use href="#bolt" transform="translate(784.5 774.5)"/>
        <use href="#bolt" transform="translate(837.4 804.3)"/>
        <use href="#bolt" transform="translate(898.3 778.3)"/>
        <path d="M868 670L881 660L892 678L884 694L876 691z" fill="#484950"/>
        <ellipse cx="881" cy="676.500" rx="2.600" ry="3.600" fill="#8c8e99"/>
        <path d="M882 661l13-7 28 12-30 12z" fill="#526769"/>
        <path d="M942.5 664L964 664L952.5 692.6L942.5 725.7L941.4 763L928 713z" fill="#5e7577"/>
        <path d="M910 612L916 599L924 597L940 648L930 652L913 631z" fill="#3b4c4c"/>
        <path d="M910 612l6-13 8-2" fill="none" stroke="#6a8081" stroke-width="1.500"/>
        <path d="M918.4 609L923.7 598.4L944.8 582.6L984.5 570.7L992.4 577.3L1005.6 609L1006.9 622.2L968.6 659.2L955.4 659.2L934.3 648.6L918.4 622.2z" fill="#5e5f67"/>
        <path d="M918.4 609L923.7 598.4L944.8 582.6L984.5 570.7L992.4 577.3" fill="none" stroke="#80818b" stroke-width="1.300"/>
        <circle cx="963.300" cy="613" r="14.500" fill="#3c3d44"/>
        <path d="M952.500 603.500a14.500 14.500 0 0 1 24.500 15c-4-10-12-16.500-24.500-15z" fill="#6e6f79"/>
        <circle cx="980.5" cy="582.6" r="3.800" fill="#45464d"/>
        <circle cx="929" cy="613" r="3.800" fill="#45464d"/>
        <circle cx="999" cy="614.3" r="3.800" fill="#45464d"/>
        <circle cx="947.5" cy="643.3" r="3.800" fill="#45464d"/>
        <path d="M963.5 664L968.6 659.2L1006.9 622.2L1011.9 648.6L1029.5 672.8L1028.4 712.5L1022.9 738.9L1011.9 765.3L963.5 789.5L952.5 785.1L941.4 763.1L942.5 725.7L952.5 692.6z" fill="#2a2b2e"/>
        <ellipse cx="986.600" cy="720.200" rx="24" ry="33" transform="rotate(22 986.600 720.200)" fill="url(#pHoleB)"/>
        <path d="M967 712c-2 20 6 37 20 39 10 1 19-6 23-17-8 6-16 6-24 0-8-6-15-14-19-22z" fill="#3a3a43" opacity=".6" filter="url(#b1)"/>
        <ellipse cx="1006.4" cy="662.9" rx="5" ry="6.200" transform="rotate(22 1006.4 662.9)" fill="#b9b9c7"/>
        <ellipse cx="964.6" cy="687.8" rx="5" ry="6.200" transform="rotate(22 964.6 687.8)" fill="#b9b9c7"/>
        <ellipse cx="1006.4" cy="751.6" rx="5" ry="6.200" transform="rotate(22 1006.4 751.6)" fill="#b9b9c7"/>
        <ellipse cx="964.6" cy="776.7" rx="5" ry="6.200" transform="rotate(22 964.6 776.7)" fill="#b9b9c7"/>
      </g>
      <!--PUMP-END-->
      <!-- orange highlight -->
      <rect x="489" y="358.100" width="953.500" height="566.500" rx="6" fill="none" stroke="#f9a51f" stroke-width="5"/>
      <!-- company logo -->
      <text x="1332.300" y="354.200" font-family="Liberation Serif, serif" font-weight="bold" font-size="17.500" fill="#969696" stroke="#969696" stroke-width="1.150" stroke-linejoin="round" textLength="76.500" lengthAdjust="spacingAndGlyphs">COMPANY</text>
      <g>
        <path d="M1414 344.200l10-5.200 10 4.800-10 5.400z" fill="#b3bbd6"/>
        <path d="M1414 344.200l10 5v6.400l-10-3.100z" fill="#5579b8"/>
        <path d="M1434 343.800l-10 5.400v6.400l9.600-3.200z" fill="#10398a"/>
        <path d="M1422.400 345l3.200-5.300 2 .9-3 5.400z" fill="#fff"/>
        <path d="M1417.600 346.600l2.500 1.200-.7 2.400 1.600 4-2.600-.9-1.300-3.300z" fill="#fff"/>
        <path d="M1431 346.200l-2.500 1.300.4 2.500-1.800 4.200 2.600-.9 1.200-3.400z" fill="#fff"/>
      </g>
      <!-- tabs -->
      <path d="M503.800 948.500q3.200-.6 4-5 .8-5.700 5-5.700h55.600q3.600 0 4.600 4.300l1.800 6.400z" fill="#e6e6e6" stroke="#cfcfd4" stroke-width=".7"/>
      <path d="M575.400 948.500l-1.600-6.400q-.6-4.300 3-4.300h62q3.400 0 4.200 4.300l1.700 6.400z" fill="#f3f3f3" stroke="#cfcfd4" stroke-width=".7"/>
      <path d="M572.800 941.500l2 7M642.800 941.500l2 7" stroke="#8c8c96" stroke-width=".9" fill="none"/>
      <!-- control panel -->
      <path d="M499.500 948.800h931q5.800 0 5.800 5.800v115.400q0 6-6 6h-930.800q-6 0-6-6v-115.400q0-5.800 6-5.800z" fill="#e6e6e6"/>
      <path d="M493.500 1068v-113.400q0-5.800 6-5.800h931q4 0 5 2" fill="none" stroke="#f4f4f4" stroke-width="1.200"/>
      <path d="M1436.300 953v117q0 6-6 6h-930.800q-4.500 0-5.600-3.500" fill="none" stroke="#84848c" stroke-width="1.400"/>
      <!-- 3D help tab -->
      <path d="M1356 1076.600h72.500l-2 6.400q-1.200 3.800-5 3.800h-59q-3.600 0-4.700-3.600z" fill="#efefef" stroke="#84848c" stroke-width="1"/>
      <defs>
        <radialGradient id="mTop" cx="58" cy="80" r="48" gradientUnits="userSpaceOnUse"><stop offset="0" stop-color="#e3e3e3"/><stop offset=".4" stop-color="#d4d4d4"/><stop offset=".75" stop-color="#b3b3b3"/><stop offset="1" stop-color="#939393"/></radialGradient>
        <linearGradient id="mBase" x1="92" y1="44" x2="50" y2="100" gradientUnits="userSpaceOnUse"><stop offset="0" stop-color="#c4c4c4"/><stop offset=".3" stop-color="#a2a2a2"/><stop offset=".5" stop-color="#3a3a3a"/><stop offset=".7" stop-color="#1b1b1b"/><stop offset="1" stop-color="#141414"/></linearGradient>
        <linearGradient id="mRed" x1="0" y1="0" x2="1" y2="1"><stop offset="0" stop-color="#d5342a"/><stop offset="1" stop-color="#e8705c"/></linearGradient>
        <linearGradient id="mRed2" x1="0" y1="0" x2="1" y2="0"><stop offset="0" stop-color="#e8705c"/><stop offset="1" stop-color="#d2332a"/></linearGradient>
        <linearGradient id="mWh" x1="0" y1="0" x2="1" y2="1"><stop offset="0" stop-color="#c9c9c9"/><stop offset="1" stop-color="#7d7d7d"/></linearGradient>
        <linearGradient id="mCab" x1="113" y1="0" x2="124" y2="0" gradientUnits="userSpaceOnUse"><stop offset="0" stop-color="#1a1a1a"/><stop offset=".55" stop-color="#1a1a1a" stop-opacity=".8"/><stop offset="1" stop-color="#1a1a1a" stop-opacity=".08"/></linearGradient>
        <radialGradient id="gSph" cx=".4" cy=".3" r=".75"><stop offset="0" stop-color="#bfe3bf"/><stop offset=".45" stop-color="#5fae6c"/><stop offset="1" stop-color="#1f7a3c"/></radialGradient>
        <radialGradient id="gLens" cx=".6" cy=".6" r=".7"><stop offset="0" stop-color="#fff"/><stop offset=".5" stop-color="#e4e4e4"/><stop offset="1" stop-color="#bdbdbd"/></radialGradient>
        <g id="mouse">
          <path d="M88.500 48.500C90 43 92.500 39.500 95 39.500 100 39.500 103 52 107 61c2.500 5.500 4.500 8 6.500 7.800" fill="none" stroke="#1a1a1a" stroke-width="1.300"/>
          <path d="M113.300 68.800c4.700-.5 8.700-10.800 9.700-31.300" fill="none" stroke="url(#mCab)" stroke-width="1.300"/>
          <path d="M35.400 78C35.400 70 43.500 60 56.700 50.600 63 46 70 41.500 74 40.500 80 39.500 86 43 92 50c5 6 9 14 8.200 19.500C99 76 93 83 88 90c-4 6-9 11-15 13.500-7 3-15 3-23-.5-8-4-14.600-15-14.600-25z" fill="url(#mBase)"/>
          <path transform="translate(7.300 6.200) scale(.920 .874)" d="M35.400 78C35.400 70 43.500 60 56.700 50.600 63 46 70 41.500 74 40.500 80 39.500 86 43 92 50c5 6 9 14 8.200 19.500C99 76 93 83 88 90c-4 6-9 11-15 13.500-7 3-15 3-23-.5-8-4-14.600-15-14.600-25z" fill="url(#mTop)"/>
          <path d="M45.500 84c-1.500-9 5-18 14-24" fill="none" stroke="#f4f4f4" stroke-width="1.200" opacity=".55"/>
          <path d="M80 64.500c3.500 4 6.500 9 8.500 14" fill="none" stroke="#8e8e8e" stroke-width=".6"/>
        </g>
        <g id="mwheel">
          <path d="M75.600 54.500C70.800 60.500 72.500 68.800 79.500 68.300c4.200-.4 7.400-3.600 8.700-7.100-3.400 3-8 3.600-9.600.6-1.100-2-.5-4.600 1.300-7.600z" fill="#fff"/>
          <ellipse cx="84.300" cy="55.300" rx="4" ry="8" transform="rotate(41 84.300 55.300)" fill="url(#mWh)" stroke="#666" stroke-width=".6"/>
        </g>
        <path id="redL" d="M59.700 52.600Q65 47.500 70.900 43.600 77.500 44 83 47.800 78 52.500 75 59.700 67 55 59.700 52.600z" fill="url(#mRed)"/>
        <path id="redR" d="M84.500 66.600Q88.500 62.500 90.800 57 95.500 59.500 97.600 63.200 95 71 89.500 78 87.500 71.500 84.500 66.600z" fill="url(#mRed2)"/>
        <path id="ah" d="M0-7 3.600 0H1.200V7H-1.200V0H-3.600z"/>
      </defs>
      <!-- mouse 1: rotate -->
      <g transform="translate(785 955)"><use href="#mouse"/><use href="#redL"/><use href="#mwheel"/></g>
      <g transform="translate(785 955)" fill="none" stroke="#111" stroke-width="2" stroke-linecap="round">
        <path d="M32.600 19V11"/>
        <path d="M33.400 4.800 37 13.600 33.200 12.200 29 13.800z" fill="#111" stroke="none"/>
        <path d="M31.300 40.800C31.800 48 33.500 52.600 35.600 52.600 38 52.600 40.300 47.500 41.300 40.800" stroke-width="2.200"/>
        <circle cx="32.900" cy="29.400" r="11" fill="url(#gSph)" stroke="none"/>
        <path d="M43 24.200C51.500 24.600 56.800 26.300 56.800 28.300 56.800 31.200 46.500 33.300 34 33.300 26 33.300 19.500 32.600 15.500 31.300" stroke-width="2"/>
        <path d="M8.600 30.800 18.200 26.400 16.800 30.900 18.600 35.600z" fill="#111" stroke="none"/>
      </g>
      <!-- mouse 2: zoom -->
      <g transform="translate(898.600 955)"><use href="#mouse"/><use href="#redR"/><use href="#mwheel" opacity=".55"/></g>
      <g fill="none">
        <path d="M935.200 995.300 942.800 1003.200" stroke="#2878ad" stroke-width="4.600" stroke-linecap="round"/>
        <circle cx="925.400" cy="985.900" r="11.800" fill="url(#gLens)" stroke="#1b6ca6" stroke-width="4.600"/>
        <circle cx="925.400" cy="985.900" r="11.800" stroke="#6fb1dc" stroke-width=".7"/>
        <path d="M918.900 964.800h10M923.900 959.800v10M919.300 1004.800h9.200" stroke="#111" stroke-width="2"/>
      </g>
      <!-- mouse 3: pan -->
      <g transform="translate(1009.500 955)"><use href="#mouse"/><use href="#redL"/><use href="#redR"/><use href="#mwheel"/></g>
      <g fill="#111">
        <use href="#ah" transform="translate(1050 969.100)"/>
        <use href="#ah" transform="translate(1050 998.500) rotate(180)"/>
        <use href="#ah" transform="translate(1034.900 984.200) rotate(-90)"/>
        <use href="#ah" transform="translate(1064.300 984.200) rotate(90)"/>
      </g>
    </svg>
    <div class="nav" style="left:57.200px;top:600.300px;font-size:7.100px;line-height:10px;letter-spacing:-.02px">Walkthroughs</div>
    <div class="nav" style="left:139.200px;top:600.300px;font-size:7.100px;line-height:10px;letter-spacing:-.02px">Views</div>
    <div class="radio" style="left:310px;top:590.700px"></div>
    <div class="radio" style="left:488px;top:590.700px"></div>
    <div class="radio" style="left:700px;top:590.700px"></div>
    <div class="nav" style="left:335px;top:592.200px;font-size:12.200px;line-height:16px;letter-spacing:-.55px">Solid</div>
    <div class="nav" style="left:513px;top:592.200px;font-size:12.200px;line-height:16px;letter-spacing:-.2px">Illustration</div>
    <div class="nav" style="left:725.400px;top:592.200px;font-size:12.200px;line-height:16px;letter-spacing:-.32px">Shaded Illustration</div>
    <div class="nav" style="left:915px;top:737.800px;font-size:6.800px;line-height:10px;letter-spacing:-.05px">3D Help?</div>
    <div class="abs" style="left:472.200px;top:667px;font-size:15px;line-height:20px;color:#1f2477;white-space:nowrap">First Step</div>
    <div class="abs" style="left:432px;top:749.500px;font-size:8.960px;line-height:12px;color:#5c609c;white-space:nowrap">Adobe Acrobat Reader 8.1 Required</div>

  </div>
</div>

<svg class="abs" style="left:1460px;top:1100px" width="24" height="20" viewBox="1460 1100 24 20"><path d="M1468.200 1109.600l2.300-2.600v2.800z" fill="#555"/><path d="M1476.200 1116l3.800-4v4z" fill="#1b2740"/></svg>

<!-- ================= ORANGE ARROW ================= -->
<svg class="abs" style="left:680px;top:236px;width:44px;height:96px" viewBox="680 236 44 96">
  <path d="M698.3 239.7h6.5v69.3h13.8L701.5 327.2 684.2 309h14.1z" fill="#f9a51f"/>
</svg>

</body>
</html>
